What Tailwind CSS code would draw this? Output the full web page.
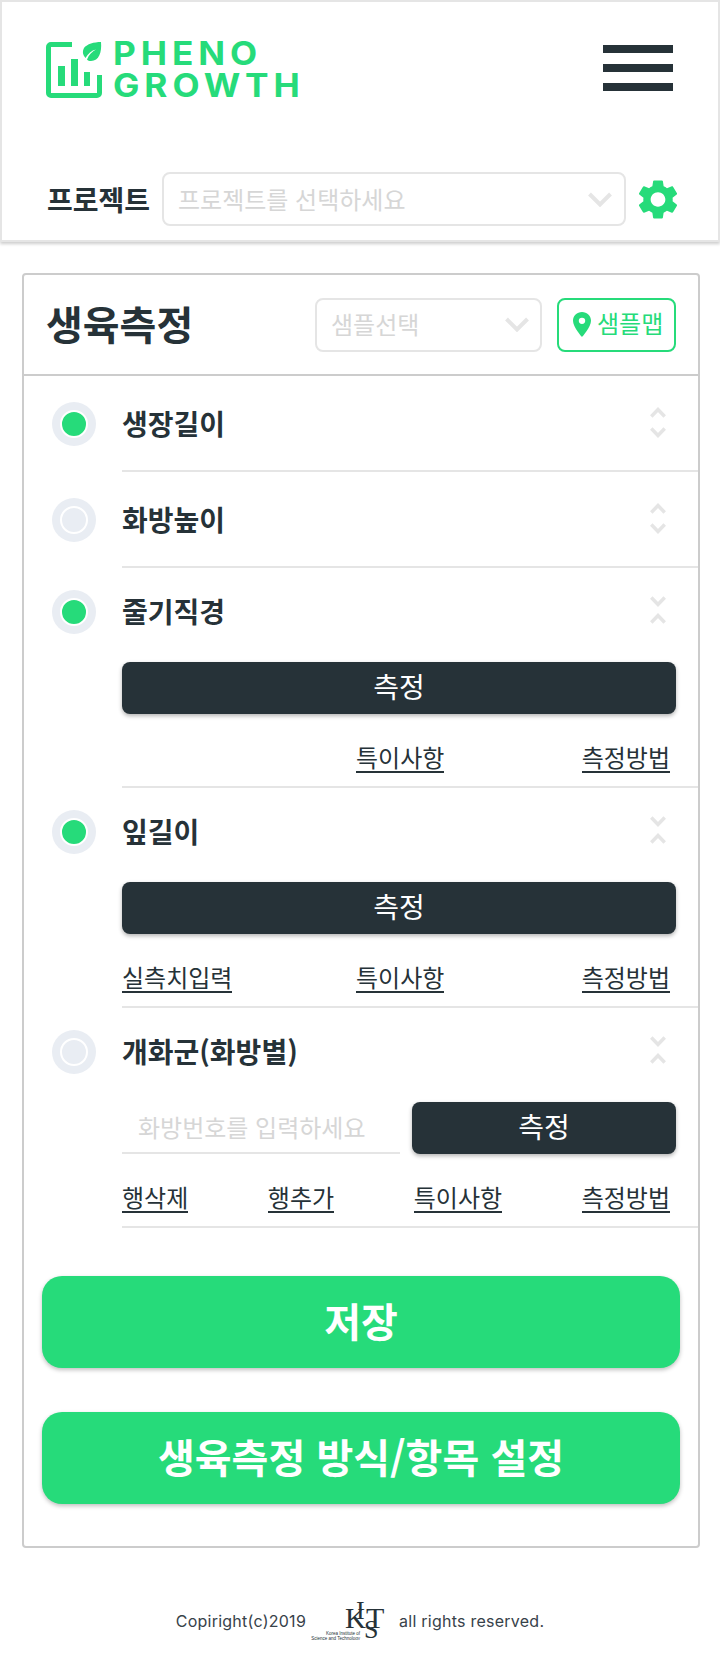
<!DOCTYPE html>
<html lang="ko">
	<head>
		<meta charset="UTF-8" />
		<meta name="viewport" content="width=device-width, initial-scale=1.0" />
		<title>생육측정</title>
		<script src="https://cdn.jsdelivr.net/npm/@tailwindcss/browser@4"></script>
	</head>
	<body class="bg-white text-[#263238] font-['Noto_Sans_CJK_KR',sans-serif]">
		<!-- Header -->
		<header class="border-2 border-[#e5e5e5] h-[242px] pl-[44px] pr-[41px] pt-[40px] shadow-[0_2px_3px_rgba(0,0,0,0.2)]">
			<div class="flex justify-between items-start">
				<div class="flex items-center gap-[12px] h-[56px]">
					<svg class="w-[56px] h-[56px]" viewBox="0 0 56 56" fill="#26db7a">
						<path d="M26 0H5a5 5 0 0 0-5 5v46a5 5 0 0 0 5 5h46a5 5 0 0 0 5-5V33h-5v18H5V5h21z" />
						<rect x="12" y="24" width="7" height="20" />
						<rect x="25" y="17" width="7" height="27" />
						<rect x="38" y="30" width="6" height="14" />
						<path d="M55 0c1 10-2 19-10 19-2 0-3-.5-4-1.500 2-5 5-8 9-10-4.500 1-8 4-10.500 8.500C37 13 36 10 38 6c3-4 10-6 17-6z" />
					</svg>
					<div class="font-['Inter',sans-serif] font-bold text-[32px] leading-[32px] text-[#26db7a] tracking-[4.500px] scale-x-[1.1] origin-left -ml-[1px]">
						<div>PHENO</div>
						<div>GROWTH</div>
					</div>
				</div>
				<div class="flex flex-col gap-[11px] w-[70px] mt-[3px] mr-[4px]">
					<div class="h-[8px] bg-[#263238]"></div>
					<div class="h-[8px] bg-[#263238]"></div>
					<div class="h-[8px] bg-[#263238]"></div>
				</div>
			</div>
			<div class="flex items-center mt-[74px] ml-[1px]">
				<span class="w-[115px] shrink-0 text-[28px] font-bold">프로젝트</span>
				<div class="w-[464px] shrink-0 h-[54px] border-2 border-[#e5e5e5] rounded-[8px] flex items-center justify-between pl-[14px] pr-[12px] text-[24px] text-[#d6d6d6]">
					<span>프로젝트를 선택하세요</span>
					<svg class="w-[24px] h-[15px]" viewBox="0 0 24 15" fill="none" stroke="#e5e5e5" stroke-width="4"><path d="M1.500 2 12 12.500 22.500 2" /></svg>
				</div>
				<svg class="w-[38px] h-[39px] shrink-0 ml-[13px]" viewBox="2.700 2.200 18.600 19.600" preserveAspectRatio="none" fill="#26db7a">
					<path d="M19.140 12.940c.04-.3.06-.61.06-.94 0-.32-.02-.64-.07-.94l2.030-1.580c.18-.14.23-.41.12-.61l-1.920-3.320c-.12-.22-.37-.29-.59-.22l-2.390.96c-.5-.38-1.030-.7-1.620-.94l-.36-2.540c-.04-.24-.24-.41-.48-.41h-3.840c-.24 0-.43.17-.47.41l-.36 2.540c-.59.24-1.130.57-1.620.94l-2.390-.96c-.22-.08-.47 0-.59.22L2.740 8.870c-.12.21-.08.47.12.61l2.030 1.580c-.05.3-.09.63-.09.94s.02.64.07.94l-2.030 1.580c-.18.14-.23.41-.12.61l1.920 3.320c.12.22.37.29.59.22l2.390-.96c.5.38 1.030.7 1.620.94l.36 2.540c.05.24.24.41.48.41h3.840c.24 0 .44-.17.47-.41l.36-2.540c.59-.24 1.130-.56 1.620-.94l2.390.96c.22.08.47 0 .59-.22l1.920-3.320c.12-.22.07-.47-.12-.61l-2.010-1.580zM12 15.600c-1.980 0-3.600-1.620-3.600-3.600s1.620-3.600 3.600-3.600 3.600 1.620 3.600 3.600-1.620 3.600-3.600 3.600z" />
				</svg>
			</div>
		</header>

		<!-- Card -->
		<section class="mt-[31px] ml-[22px] mr-[20px] border-2 border-[#cccccc] rounded-[4px] h-[1275px]">
			<div class="h-[101px] border-b-2 border-[#cccccc] flex items-center pl-[22px] pr-[22px]">
				<h1 class="text-[40px] font-bold flex-1 pb-[4px]">생육측정</h1>
				<div class="w-[227px] h-[54px] border-2 border-[#e5e5e5] rounded-[8px] flex items-center justify-between pl-[14px] pr-[11px] text-[24px] text-[#d6d6d6]">
					<span class="pb-[2px]">샘플선택</span>
					<svg class="w-[24px] h-[15px]" viewBox="0 0 24 15" fill="none" stroke="#e5e5e5" stroke-width="4"><path d="M1.500 2 12 12.500 22.500 2" /></svg>
				</div>
				<div class="w-[119px] h-[54px] ml-[15px] border-2 border-[#26db7a] rounded-[8px] flex items-center pl-[14px] gap-[6px] text-[24px] text-[#26db7a]">
					<svg class="w-[18px] h-[25px]" viewBox="5 2 14 20" preserveAspectRatio="none" fill="#26db7a"><path d="M12 2C8.130 2 5 5.130 5 9c0 5.250 7 13 7 13s7-7.750 7-13c0-3.870-3.130-7-7-7zm0 9.500a2.500 2.500 0 1 1 0-5 2.500 2.500 0 0 1 0 5z" /></svg>
					<span class="pb-[3px]">샘플맵</span>
				</div>
			</div>

			<!-- 생장길이 -->
			<div class="flex h-[96px]">
				<div class="w-[98px] pl-[28px] pt-[26px]">
					<div class="w-[44px] h-[44px] rounded-full bg-[#e9edf3] flex items-center justify-center">
						<div class="w-[28px] h-[28px] rounded-full border-2 border-white bg-[#26db7a]"></div>
					</div>
				</div>
				<div class="flex-1 border-b-2 border-[#e5e5e5] pt-[26px] pr-[32px]">
					<div class="flex justify-between items-center h-[44px]">
						<span class="text-[28px] font-bold pb-[3px]">생장길이</span>
						<svg class="w-[16px] h-[31px] mb-[3px]" viewBox="0 0 16 31" fill="none" stroke="#e5e5e5" stroke-width="3.500"><path d="M1.300 9.500 8 2.500l6.700 7" /><path d="M1.300 21.500 8 28.500l6.700-7" /></svg>
					</div>
				</div>
			</div>

			<!-- 화방높이 -->
			<div class="flex h-[96px]">
				<div class="w-[98px] pl-[28px] pt-[26px]">
					<div class="w-[44px] h-[44px] rounded-full bg-[#e9edf3] flex items-center justify-center">
						<div class="w-[28px] h-[28px] rounded-full border-2 border-white"></div>
					</div>
				</div>
				<div class="flex-1 border-b-2 border-[#e5e5e5] pt-[26px] pr-[32px]">
					<div class="flex justify-between items-center h-[44px]">
						<span class="text-[28px] font-bold pb-[3px]">화방높이</span>
						<svg class="w-[16px] h-[31px] mb-[3px]" viewBox="0 0 16 31" fill="none" stroke="#e5e5e5" stroke-width="3.500"><path d="M1.300 9.500 8 2.500l6.700 7" /><path d="M1.300 21.500 8 28.500l6.700-7" /></svg>
					</div>
				</div>
			</div>

			<!-- 줄기직경 -->
			<div class="flex h-[220px]">
				<div class="w-[98px] pl-[28px] pt-[22px]">
					<div class="w-[44px] h-[44px] rounded-full bg-[#e9edf3] flex items-center justify-center">
						<div class="w-[28px] h-[28px] rounded-full border-2 border-white bg-[#26db7a]"></div>
					</div>
				</div>
				<div class="flex-1 border-b-2 border-[#e5e5e5] pt-[22px]">
					<div class="flex justify-between items-center h-[44px] pr-[32px]">
						<span class="text-[28px] font-bold pb-[2px]">줄기직경</span>
						<svg class="w-[16px] h-[28px] mb-[4px]" viewBox="0 0 16 28" fill="none" stroke="#e5e5e5" stroke-width="3.500"><path d="M1.300 1.500 8 8.500l6.700-7" /><path d="M1.300 26.500 8 19.500l6.700 7" /></svg>
					</div>
					<div class="mt-[28px] mr-[22px] h-[52px] pb-[4px] rounded-[8px] bg-[#263238] text-white text-[28px] flex items-center justify-center shadow-[0_2px_4px_rgba(0,0,0,0.3)]">측정</div>
					<div class="flex mt-[31px] mr-[28px] text-[24px]">
						<div class="w-[234px]"></div>
						<a class="h-[28px] leading-[24px] border-b-2 border-[#263238]">특이사항</a>
						<a class="ml-auto h-[28px] leading-[24px] border-b-2 border-[#263238]">측정방법</a>
					</div>
				</div>
			</div>

			<!-- 잎길이 -->
			<div class="flex h-[220px]">
				<div class="w-[98px] pl-[28px] pt-[22px]">
					<div class="w-[44px] h-[44px] rounded-full bg-[#e9edf3] flex items-center justify-center">
						<div class="w-[28px] h-[28px] rounded-full border-2 border-white bg-[#26db7a]"></div>
					</div>
				</div>
				<div class="flex-1 border-b-2 border-[#e5e5e5] pt-[22px]">
					<div class="flex justify-between items-center h-[44px] pr-[32px]">
						<span class="text-[28px] font-bold pb-[2px]">잎길이</span>
						<svg class="w-[16px] h-[28px] mb-[4px]" viewBox="0 0 16 28" fill="none" stroke="#e5e5e5" stroke-width="3.500"><path d="M1.300 1.500 8 8.500l6.700-7" /><path d="M1.300 26.500 8 19.500l6.700 7" /></svg>
					</div>
					<div class="mt-[28px] mr-[22px] h-[52px] pb-[4px] rounded-[8px] bg-[#263238] text-white text-[28px] flex items-center justify-center shadow-[0_2px_4px_rgba(0,0,0,0.3)]">측정</div>
					<div class="flex mt-[31px] mr-[28px] text-[24px]">
						<div class="w-[234px] flex"><a class="h-[28px] leading-[24px] border-b-2 border-[#263238]">실측치입력</a></div>
						<a class="h-[28px] leading-[24px] border-b-2 border-[#263238]">특이사항</a>
						<a class="ml-auto h-[28px] leading-[24px] border-b-2 border-[#263238]">측정방법</a>
					</div>
				</div>
			</div>

			<!-- 개화군(화방별) -->
			<div class="flex h-[220px]">
				<div class="w-[98px] pl-[28px] pt-[22px]">
					<div class="w-[44px] h-[44px] rounded-full bg-[#e9edf3] flex items-center justify-center">
						<div class="w-[28px] h-[28px] rounded-full border-2 border-white"></div>
					</div>
				</div>
				<div class="flex-1 border-b-2 border-[#e5e5e5] pt-[22px]">
					<div class="flex justify-between items-center h-[44px] pr-[32px]">
						<span class="text-[28px] font-bold pb-[2px]">개화군(화방별)</span>
						<svg class="w-[16px] h-[28px] mb-[4px]" viewBox="0 0 16 28" fill="none" stroke="#e5e5e5" stroke-width="3.500"><path d="M1.300 1.500 8 8.500l6.700-7" /><path d="M1.300 26.500 8 19.500l6.700 7" /></svg>
					</div>
					<div class="flex gap-[12px] mt-[28px] mr-[22px]">
						<div class="w-[278px] h-[52px] border-b-2 border-[#e5e5e5] pl-[16px] flex items-center text-[24px] text-[#d6d6d6]">화방번호를 입력하세요</div>
						<div class="flex-1 h-[52px] pb-[4px] rounded-[8px] bg-[#263238] text-white text-[28px] flex items-center justify-center shadow-[0_2px_4px_rgba(0,0,0,0.3)]">측정</div>
					</div>
					<div class="flex justify-between mt-[31px] mr-[28px] text-[24px]">
						<a class="h-[28px] leading-[24px] border-b-2 border-[#263238]">행삭제</a>
						<a class="h-[28px] leading-[24px] border-b-2 border-[#263238]">행추가</a>
						<a class="h-[28px] leading-[24px] border-b-2 border-[#263238]">특이사항</a>
						<a class="h-[28px] leading-[24px] border-b-2 border-[#263238]">측정방법</a>
					</div>
				</div>
			</div>

			<div class="px-[18px] pt-[48px] flex flex-col gap-[44px]">
				<button class="h-[92px] pb-[5px] rounded-[20px] bg-[#26db7a] text-white text-[40px] font-bold shadow-[0_2px_4px_rgba(0,0,0,0.25)]">저장</button>
				<button class="h-[92px] pb-[5px] rounded-[20px] bg-[#26db7a] text-white text-[40px] font-bold shadow-[0_2px_4px_rgba(0,0,0,0.25)]">생육측정 방식/항목 설정</button>
			</div>
		</section>

		<!-- Footer -->
		<footer class="flex justify-center items-center mt-[54px] font-['Inter',sans-serif] text-[16px] tracking-[0.25px] text-[#37424a]">
			<span>Copiright(c)2019</span>
			<div class="relative w-[70px] h-[38px] ml-[9px] mr-[14px] font-['Liberation_Serif',serif] text-[#263238] tracking-normal">
				<span class="absolute left-[30px] top-[6px] text-[29px] leading-[20px]">K</span>
				<span class="absolute left-[41px] top-0 text-[26px] leading-[18px]">I</span>
				<span class="absolute left-[51px] top-[6px] text-[30px] leading-[20px]">T</span>
				<span class="absolute left-[49px] top-[19px] text-[26px] leading-[18px]">S</span>
				<div class="absolute right-[25px] top-[29px] text-right font-['Liberation_Sans',sans-serif] text-[4.500px] leading-[5px] whitespace-nowrap">Korea Institute of<br />Science and Technology</div>
			</div>
			<span>all rights reserved.</span>
		</footer>
	</body>
</html>
